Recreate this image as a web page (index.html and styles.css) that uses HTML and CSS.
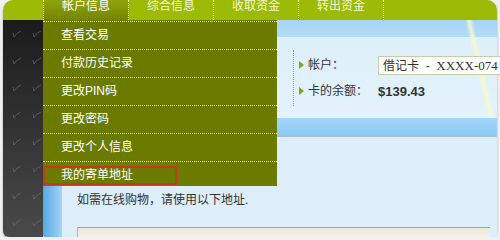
FILE: index.html
```html
<!DOCTYPE html>
<html lang="zh-CN">
<head>
    <meta charset="UTF-8">
    <meta name="viewport" content="width=device-width, initial-scale=1.0">
    <title>帐户信息</title>
    <link rel="stylesheet" href="styles.css">
</head>
<body>

    <div class="frame">
        <div class="topbar">
            <div class="tab tab-active">帐户信息</div>
            <div class="tab">综合信息</div>
            <div class="tab">收取资金</div>
            <div class="tab">转出资金</div>
        </div>

        <div class="layout">
            <div class="sidebar">
                <svg width="40" height="217" viewBox="0 0 40 217">
                    <defs>
                        <pattern id="ticks" x="0" y="0" width="20" height="27" patternUnits="userSpaceOnUse">
                            <path d="M11 17 Q13 13 18 11 M11 17 L10 13" fill="none" stroke="#777" stroke-width="1" opacity="0.55"/>
                        </pattern>
                    </defs>
                    <rect width="40" height="217" fill="url(#ticks)"/>
                </svg>
            </div>

            <div class="main">
                <div class="panel-account">
                    <div class="info">
                        <div class="info-row">
                            <span class="bullet"></span>
                            <span class="label">帐户：</span>
                            <div class="select">借记卡&nbsp;&nbsp;-&nbsp;&nbsp;<span class="num">XXXX-074</span></div>
                        </div>
                        <div class="info-row">
                            <span class="bullet"></span>
                            <span class="label">卡的余额：</span>
                            <b class="balance">$139.43</b>
                        </div>
                    </div>
                </div>

                <div class="panel-address">
                    <div class="band"></div>
                    <div class="address-body">
                        <div class="strip"></div>
                        <div class="address-content">
                            <p class="note">如需在线购物，请使用以下地址.</p>
                            <div class="address-card"></div>
                        </div>
                    </div>
                </div>

                <!-- dropdown of the active tab -->
                <ul class="menu">
                    <li>查看交易</li>
                    <li>付款历史记录</li>
                    <li>更改PIN码</li>
                    <li>更改密码</li>
                    <li>更改个人信息</li>
                    <li class="menu-last"><span class="marked">我的寄单地址</span></li>
                </ul>
            </div>
        </div>
    </div>

</body>
</html>
```

FILE: styles.css
```css
html, body {
    overflow: hidden;
}
body {
    margin: 0;
    padding: 0;
    background-color: #f0f0f0;
    font-family: "Liberation Sans", "Noto Sans CJK SC", sans-serif;
    font-size: 12px;
    color: #333;
}
.frame {
    width: 494px;
    height: 237px;
    margin-left: 3px;
    box-shadow: 0 1px 2px rgba(0, 0, 0, 0.35);
    border-radius: 10px 10px 6px 6px;
}
.topbar {
    display: flex;
    height: 20px;
    padding-left: 40px;
    background-color: #9cba06;
    border-radius: 10px 10px 0 0;
}
.tab {
    width: 84px;
    line-height: 13px;
    text-align: center;
    color: #f3f7d4;
    border-right: 1px dotted #eef3c0;
}
.tab-active {
    border-left: 1px dotted #eef3c0;
    width: 84px;
    color: #fff;
    background: linear-gradient(#8ea30e, #738500);
}
.layout {
    display: flex;
    height: 217px;
}
.sidebar {
    width: 40px;
    background: linear-gradient(#1b1b1b, #4a4a4a);
    border-radius: 0 0 0 6px;
}
.sidebar svg {
    display: block;
}
.main {
    position: relative;
    width: 454px;
}
.panel-account {
    height: 98px;
    padding-top: 30px;
    box-sizing: border-box;
    background:
        linear-gradient(77deg, transparent 93.2%, rgba(246, 250, 205, 0.9) 94.1%, transparent 95%),
        linear-gradient(#a7d4f5, #b4dbf7 17px, #deeffa 17px, #e3f2fb);
}
.info {
    margin-left: 250px;
    padding: 2px 0;
    border-left: 1px dotted #86a84a;
}
.info-row {
    display: flex;
    align-items: center;
    height: 26px;
}
.bullet {
    flex-shrink: 0;
    width: 0;
    height: 0;
    margin: 0 4px 0 5px;
    border-left: 5px solid #82a31c;
    border-top: 4px solid transparent;
    border-bottom: 4px solid transparent;
}
.label {
    flex-shrink: 0;
    width: 70px;
    line-height: 14px;
}
.select {
    flex-shrink: 0;
    width: 117px;
    height: 17px;
    line-height: 17px;
    padding-left: 4px;
    font-size: 12px;
    white-space: nowrap;
    color: #333;
    background-color: #fff;
    border: 1px solid #c5cda6;
    border-right: none;
}
.num {
    font-family: "Liberation Serif", serif;
    font-size: 13px;
}
.balance {
    font-size: 13px;
    color: #333;
}
.panel-address {
    height: 119px;
}
.band {
    height: 18px;
    background: linear-gradient(#a4d6fb, #8bc9f5);
    border-bottom: 1px solid #a6bccd;
}
.address-body {
    display: flex;
    height: 100px;
    background-color: #ddeefa;
}
.strip {
    width: 19px;
    background: linear-gradient(to right, #55a8e6, #a5d4f6);
    border-radius: 0 0 0 2px;
}
.address-content {
    flex: 1;
    padding: 56px 0 0 15px;
}
.note {
    margin: 0;
    line-height: 14px;
}
.address-card {
    height: 9px;
    margin: 20px 7px 0 0;
    background: linear-gradient(#e8e6d6, #f3f1e6);
    border-top: 1px solid #a3a39a;
    border-left: 1px solid #b8b8ae;
}
.menu {
    position: absolute;
    top: 0;
    left: 0;
    width: 234px;
    margin: 0;
    padding: 1px 0 0;
    list-style: none;
    background-color: #6b7b00;
}
.menu li {
    height: 27px;
    line-height: 27px;
    padding-left: 18px;
    color: #fff;
    border-top: 1px dotted #f2f2d8;
}
.menu .menu-last {
    height: 24px;
    padding-left: 0;
}
.marked {
    display: block;
    width: 114px;
    height: 15px;
    margin-top: 4px;
    padding-left: 16px;
    line-height: 15px;
    border: 2px solid #c8381c;
}
```
